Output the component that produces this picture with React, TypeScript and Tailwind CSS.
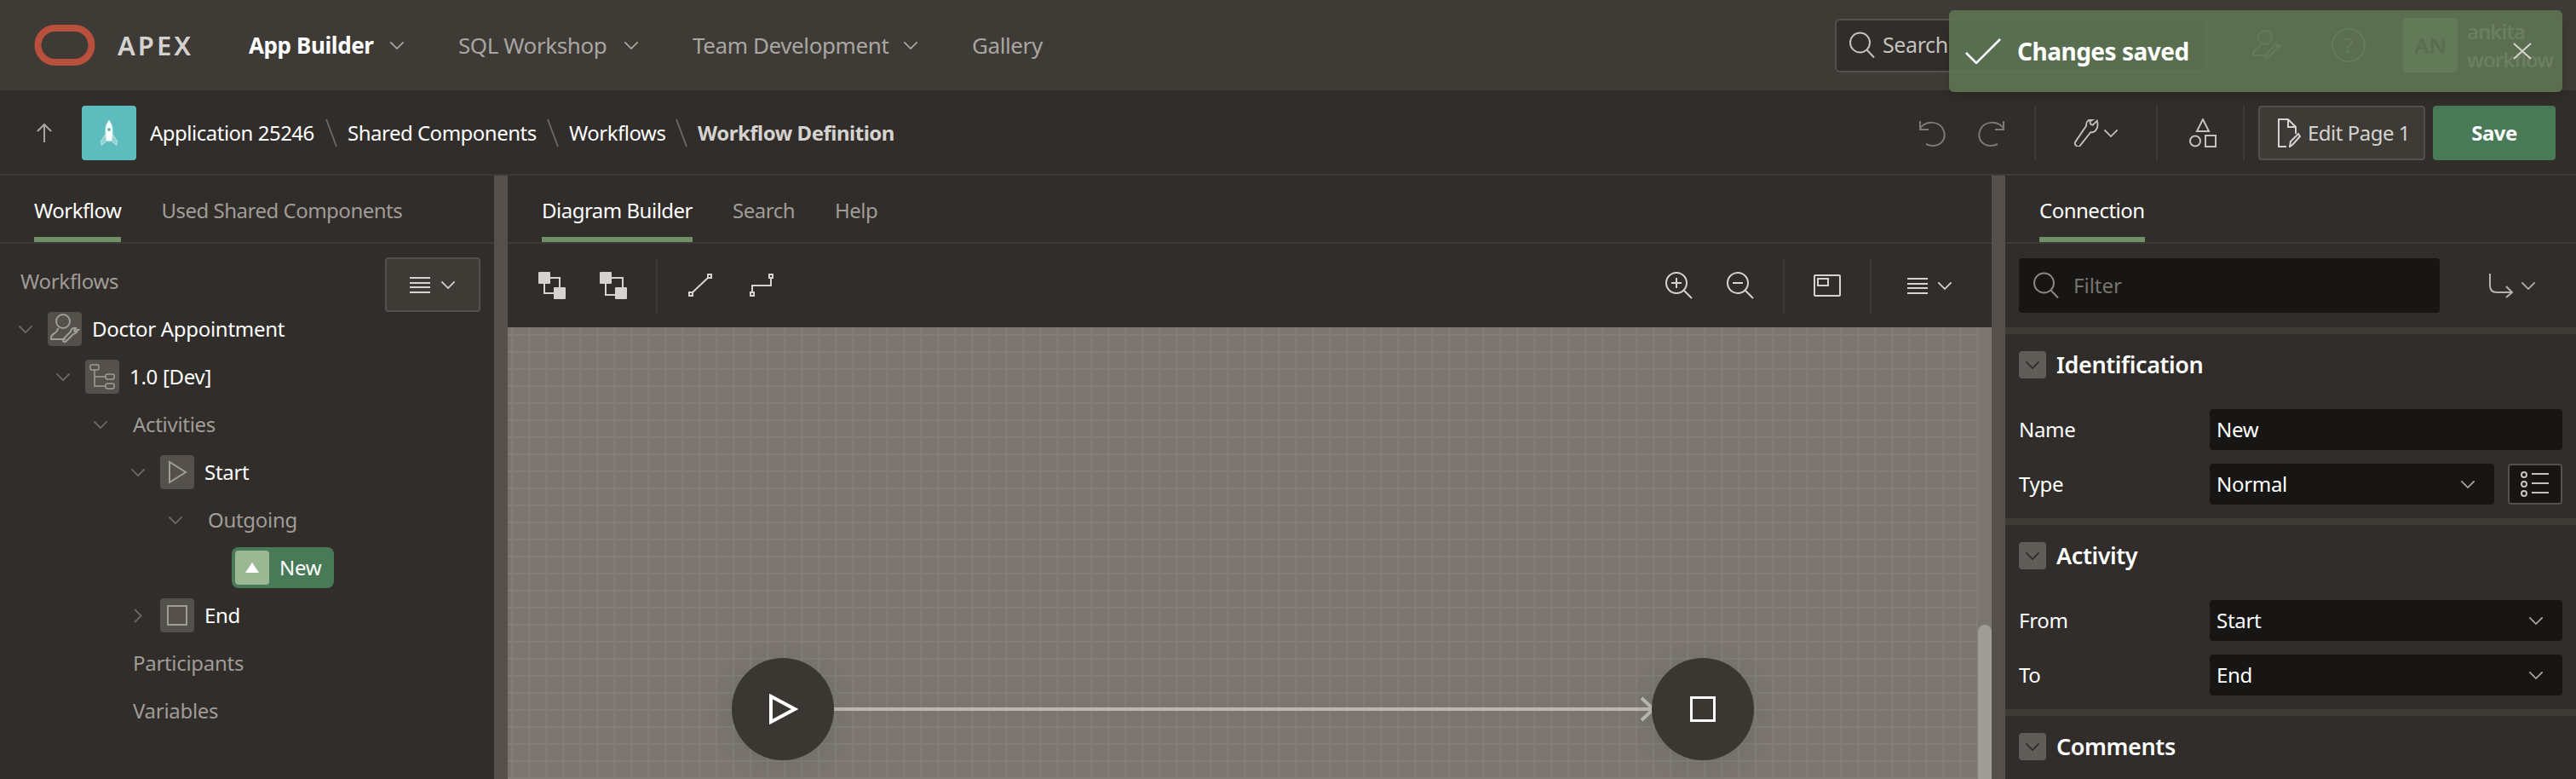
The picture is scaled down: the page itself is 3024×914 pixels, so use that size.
import { ReactNode } from "react";

function Chevron({ className = "" }: { className?: string }) {
	return (
		<svg viewBox="0 0 20 12" fill="none" stroke="currentColor" strokeWidth="2" className={"w-[18px] h-[11px] shrink-0 " + className}>
			<path d="M1.5 1.5 10 10l8.5-8.5" />
		</svg>
	);
}

function Glass({ className = "" }: { className?: string }) {
	return (
		<svg viewBox="0 0 32 32" fill="none" stroke="currentColor" strokeWidth="2" className={"w-8 h-8 shrink-0 " + className}>
			<circle cx="13.5" cy="13" r="11.5" />
			<path d="m21.5 21.5 8.5 9" />
		</svg>
	);
}

function MenuLines() {
	return (
		<svg viewBox="0 0 24 20" fill="none" stroke="currentColor" strokeWidth="2" className="w-6 h-5 shrink-0">
			<path d="M0 2h24M0 8h24M0 13h24M0 19h24" />
		</svg>
	);
}

function UserWrench({ className = "" }: { className?: string }) {
	return (
		<svg viewBox="0 0 40 40" fill="none" stroke="currentColor" strokeWidth="2" className={className}>
			<circle cx="18" cy="11" r="8" />
			<path d="M12 19c0 3-1 4-4 6-3 1.500-4 3-4 6v1h17" />
			<path d="M36 21l-3 3-2-2 2-3c-3-1-6 1-6 4l-9 9c-1 2 2 4 3 3l9-9c3 0 5-3 4-5z" />
		</svg>
	);
}

function VersionIcon() {
	return (
		<svg viewBox="0 0 40 40" fill="none" stroke="#a09c97" strokeWidth="1.5" className="w-10 h-10">
			<rect x="6" y="6" width="10" height="6" rx="2" />
			<rect x="24" y="17" width="10" height="6" rx="2" />
			<rect x="24" y="28" width="10" height="6" rx="2" />
			<path d="M11 12v19h13M11 20h13" />
		</svg>
	);
}

function StartIcon() {
	return (
		<svg viewBox="0 0 40 40" fill="none" stroke="#a09c97" strokeWidth="2" className="w-10 h-10">
			<path d="M11 8v24l19-12z" />
		</svg>
	);
}

function EndIcon() {
	return (
		<svg viewBox="0 0 40 40" fill="none" stroke="#a09c97" strokeWidth="2" className="w-10 h-10">
			<rect x="9" y="9" width="22" height="22" />
		</svg>
	);
}

const navItems = [
	{ label: "App Builder", cls: "font-bold text-white w-[183px]", chev: true },
	{ label: "SQL Workshop", cls: "text-[#a9a6a1] w-[212px]", chev: true },
	{ label: "Team Development", cls: "text-[#a9a6a1] w-[265px]", chev: true },
	{ label: "Gallery", cls: "text-[#a9a6a1] w-[90px]", chev: false },
];

function TopNav() {
	return (
		<header className="relative h-[106px] shrink-0 bg-[#3e3b37] flex items-center pl-10 pr-7">
			<svg viewBox="0 0 72 48" fill="none" className="w-[72px] h-12 shrink-0">
				<rect x="4.500" y="4" width="63" height="40" rx="20" stroke="#b8503b" strokeWidth="8" />
			</svg>
			<span className="ml-[26px] w-[154px] text-[31px] font-semibold tracking-[3px] text-[#d4d2ce]">APEX</span>
			<nav className="flex items-center gap-[63px] text-[26px] tracking-[-0.4px]">
				{navItems.map((item) => (
					<div key={item.label} className={"flex items-center justify-between whitespace-nowrap " + item.cls}>
						<span>{item.label}</span>
						{item.chev && <Chevron className="text-[#a9a6a1]" />}
					</div>
				))}
			</nav>
			<div className="ml-auto flex items-center">
				<div className="w-[437px] h-[63px] bg-[#312d2a] border-2 border-[#55504c] rounded-md flex items-center pl-[14px] gap-[8px] text-[#c5c2be]">
					<Glass />
					<span className="text-[25px] tracking-[-0.4px]">Search</span>
				</div>
				<UserWrench className="ml-[50px] w-10 h-10 text-[#a9a6a1]" />
				<div className="ml-[56px] w-10 h-10 rounded-full border-2 border-[#a9a6a1] flex items-center justify-center text-[24px] text-[#a9a6a1]">?</div>
				<div className="ml-[44px] w-16 h-16 rounded bg-[#8cab88] flex items-center justify-center text-[26px] font-semibold text-[#2f2c29]">AN</div>
				<div className="ml-[11px] w-[100px] text-[24px] leading-[33px] tracking-[-1px] font-semibold text-[#d5d3cf]">
					<p>ankita</p>
					<p>workflow</p>
				</div>
			</div>
			<div className="absolute left-[2288px] top-3 w-[720px] h-24 rounded-md bg-[#5e7453]/90 shadow-lg flex items-center pl-[19px] text-white">
				<svg viewBox="0 0 42 30" fill="none" stroke="currentColor" strokeWidth="2.500" className="w-[42px] h-[30px] shrink-0">
					<path d="M1 17l12 12L41 1" />
				</svg>
				<span className="ml-[19px] text-[28px] font-bold tracking-[-0.5px]">Changes saved</span>
				<svg viewBox="0 0 22 20" fill="none" stroke="currentColor" strokeWidth="2" className="absolute left-[662px] top-[38px] w-[22px] h-5 text-[#d5d3cf]">
					<path d="M1 1l20 18M21 1 1 19" />
				</svg>
			</div>
		</header>
	);
}

function Slash() {
	return (
		<svg viewBox="0 0 14 34" fill="none" stroke="#6b6762" strokeWidth="2" className="w-[14px] h-[34px] shrink-0">
			<path d="M1 1l12 32" />
		</svg>
	);
}

function Divider() {
	return <div className="w-0.5 h-16 bg-[#3e3b37] shrink-0" />;
}

function PageBar() {
	return (
		<div className="h-[100px] shrink-0 bg-[#312d2a] border-b-2 border-[#3e3b37] flex items-center pt-0.5 pl-[42px] pr-6 text-[24px] tracking-[-0.5px] text-white">
			<svg viewBox="0 0 20 24" fill="none" stroke="#a9a6a1" strokeWidth="2" className="w-5 h-6 shrink-0">
				<path d="M10 23V2M2 10l8-8 8 8" />
			</svg>
			<div className="ml-[34px] w-16 h-16 rounded bg-[#5dbcbc] flex items-center justify-center shrink-0">
				<svg viewBox="0 0 26 40" className="w-6 h-8">
					<path d="M13 1c-5 6-6 13-5 22l1 9h8l1-9c1-9 0-16-5-22z" fill="#fff" stroke="#a7dada" strokeWidth="1" />
					<path d="M8 22 1 32l1 6 7-6zM18 22l7 10-1 6-7-6z" fill="#8fd0d0" stroke="#d8f0f0" strokeWidth="1" />
					<circle cx="13" cy="15" r="2.500" fill="#5dbcbc" />
				</svg>
			</div>
			<span className="ml-4 w-[206px] whitespace-nowrap">Application 25246</span>
			<Slash />
			<span className="ml-3 w-[234px] whitespace-nowrap">Shared Components</span>
			<Slash />
			<span className="ml-3 w-[125px] whitespace-nowrap">Workflows</span>
			<Slash />
			<span className="ml-3 whitespace-nowrap font-bold text-[#d5d3cf]">Workflow Definition</span>

			<div className="ml-auto flex items-center">
				<svg viewBox="0 0 32 32" fill="none" stroke="#7d7974" strokeWidth="2" className="w-8 h-8 shrink-0">
					<path d="M2 2v10h10M2 11c6-10 24-10 28 3 3 11-5 17-13 17-3 0-6-1-8-2" />
				</svg>
				<svg viewBox="0 0 32 32" fill="none" stroke="#7d7974" strokeWidth="2" className="ml-[38px] w-8 h-8 shrink-0">
					<path d="M30 2v10H20M30 11C24 1 6 1 2 14c-3 11 5 17 13 17 3 0 6-1 8-2" />
				</svg>
				<div className="ml-[34px]"><Divider /></div>
				<svg viewBox="0 0 38 38" fill="none" stroke="#c5c2be" strokeWidth="2.200" className="ml-[44px] w-8 h-8 shrink-0">
					<path d="M33 2l-6 6-3-1-1-4 5-3c-6-1-11 3-10 9L3 31c-3 4 3 9 6 6l15-19c6 1 12-6 9-16z" />
				</svg>
				<Chevron className="ml-[3px] text-[#c5c2be]" />
				<div className="ml-[44px]"><Divider /></div>
				<svg viewBox="0 0 32 34" fill="none" stroke="#c5c2be" strokeWidth="2" className="ml-[37px] w-8 h-[34px] shrink-0">
					<path d="M16 1l7 14H9zM19 20h12v13H19z" />
					<circle cx="7" cy="26.500" r="6" />
				</svg>
				<div className="ml-[31px]"><Divider /></div>
				<div className="ml-4 w-[196px] h-16 rounded bg-[#3e3b37] border-2 border-[#55504c] flex items-center pl-5 gap-2 text-[#d5d3cf]">
					<svg viewBox="0 0 28 34" fill="none" stroke="currentColor" strokeWidth="2" className="w-7 h-[34px] shrink-0">
						<path d="M11 33H2V1h11l9 9v8M13 1v9h9" />
						<path d="M15 33l1-6 9-9 2 3-9 10z" />
					</svg>
					<span className="whitespace-nowrap">Edit Page 1</span>
				</div>
				<div className="ml-[9px] w-36 h-16 rounded bg-[#487a57] flex items-center justify-center font-bold text-white">Save</div>
			</div>
		</div>
	);
}

function Tab({ label, active = false }: { label: string; active?: boolean }) {
	return (
		<div className={"h-[78px] flex items-center border-b-[6px] whitespace-nowrap pt-[10px] " + (active ? "border-[#6f8f66] text-white" : "border-transparent text-[#a09c97]")}>
			{label}
		</div>
	);
}

function TabRow({ children, className = "" }: { children: ReactNode; className?: string }) {
	return (
		<div className={"h-[80px] shrink-0 border-b-2 border-[#3e3b37] flex text-[24px] tracking-[-0.5px] " + className}>
			{children}
		</div>
	);
}

type TreeRow = {
	label: string;
	pad: string;
	chevron?: "down" | "right";
	icon?: ReactNode;
	muted?: boolean;
};

const treeRows: TreeRow[] = [
	{ label: "Doctor Appointment", pad: "pl-0", chevron: "down", icon: <UserWrench className="w-10 h-10 text-[#a09c97]" /> },
	{ label: "1.0 [Dev]", pad: "pl-11", chevron: "down", icon: <VersionIcon /> },
	{ label: "Activities", pad: "pl-22", chevron: "down", muted: true },
	{ label: "Start", pad: "pl-33", chevron: "down", icon: <StartIcon /> },
	{ label: "Outgoing", pad: "pl-44", chevron: "down", muted: true },
	{ label: "End", pad: "pl-33", chevron: "right", icon: <EndIcon /> },
	{ label: "Participants", pad: "pl-22", muted: true },
	{ label: "Variables", pad: "pl-22", muted: true },
];

function TreeLine({ row }: { row: TreeRow }) {
	return (
		<div className={"h-14 flex items-center text-[24px] tracking-[-0.3px] " + row.pad}>
			<div className="w-14 pl-[21px] shrink-0 text-[#6f6b66]">
				{row.chevron === "down" && <Chevron />}
				{row.chevron === "right" && <Chevron className="-rotate-90" />}
			</div>
			{row.icon ? <div className="w-10 h-10 rounded bg-[#55504c] shrink-0 mr-3">{row.icon}</div> : <div className="w-3 shrink-0" />}
			<span className={row.muted ? "text-[#a09c97]" : "text-white"}>{row.label}</span>
		</div>
	);
}

function WorkflowTree() {
	return (
		<aside className="w-[580px] shrink-0 bg-[#312d2a] flex flex-col">
			<TabRow className="pl-10 gap-[47px]">
				<Tab label="Workflow" active />
				<Tab label="Used Shared Components" />
			</TabRow>
			<div className="h-[72px] flex justify-between pl-6 pr-4 pt-4">
				<span className="text-[24px] tracking-[-0.3px] text-[#a09c97] mt-[10px]">Workflows</span>
				<div className="w-28 h-16 rounded bg-[#3e3b37] border-2 border-[#55504c] flex items-center justify-center gap-3 text-[#d5d3cf]">
					<MenuLines />
					<Chevron />
				</div>
			</div>
			<div>
				{treeRows.slice(0, 5).map((row) => <TreeLine key={row.label} row={row} />)}
				<div className="h-14 flex items-center pl-[272px] text-[24px] tracking-[-0.3px] text-white">
					<div className="h-12 w-[120px] rounded-lg bg-[#487a57] flex items-center pl-1">
						<div className="w-10 h-10 rounded bg-[#9bb892] flex items-center justify-center">
							<svg viewBox="0 0 16 12" fill="#fff" className="w-4 h-3"><path d="M8 0l8 12H0z" /></svg>
						</div>
						<span className="ml-3">New</span>
					</div>
				</div>
				{treeRows.slice(5).map((row) => <TreeLine key={row.label} row={row} />)}
			</div>
		</aside>
	);
}

function Splitter() {
	return <div className="w-4 shrink-0 bg-[#55504c]" />;
}

function NodeIcon({ children }: { children: ReactNode }) {
	return (
		<svg viewBox="0 0 32 32" fill="none" stroke="#d5d3cf" strokeWidth="2" className="w-8 h-8 shrink-0">
			{children}
		</svg>
	);
}

function Toolbar() {
	return (
		<div className="h-[98px] shrink-0 bg-[#312d2a] flex items-center pl-9 pr-[46px] text-[#d5d3cf]">
			<NodeIcon>
				<rect x="7" y="7" width="18" height="18" />
				<rect x="0" y="0" width="14" height="14" rx="1" fill="#d5d3cf" stroke="none" />
				<rect x="18" y="18" width="14" height="14" rx="1" fill="#d5d3cf" stroke="none" />
			</NodeIcon>
			<div className="ml-10">
				<NodeIcon>
					<path d="M14 7h13v12M7 14v13h12" />
					<rect x="0" y="0" width="14" height="14" rx="1" fill="#d5d3cf" stroke="none" />
					<rect x="18" y="18" width="14" height="14" rx="1" fill="#d5d3cf" stroke="none" />
				</NodeIcon>
			</div>
			<div className="ml-[34px]"><Divider /></div>
			<svg viewBox="0 0 28 28" fill="none" stroke="currentColor" strokeWidth="2" className="ml-9 w-7 h-7 shrink-0">
				<rect x="1" y="22" width="4" height="4" />
				<rect x="23" y="1" width="4" height="4" />
				<path d="M5 22 23 5" />
			</svg>
			<svg viewBox="0 0 28 28" fill="none" stroke="currentColor" strokeWidth="2" className="ml-11 w-7 h-7 shrink-0">
				<rect x="1" y="22" width="4" height="4" />
				<rect x="23" y="1" width="4" height="4" />
				<path d="M3 22V14h22V5" />
			</svg>
			<div className="ml-auto flex items-center">
				<NodeIcon>
					<circle cx="13" cy="13" r="12" />
					<path d="M7 13h12M13 7v12M22 22l9 9" />
				</NodeIcon>
				<div className="ml-10">
					<NodeIcon>
						<circle cx="13" cy="13" r="12" />
						<path d="M7 13h12M22 22l9 9" />
					</NodeIcon>
				</div>
				<div className="ml-[34px]"><Divider /></div>
				<svg viewBox="0 0 32 26" fill="none" stroke="currentColor" strokeWidth="2" className="ml-[34px] w-8 h-[26px] shrink-0">
					<rect x="1" y="1" width="30" height="24" rx="1" />
					<rect x="5" y="5" width="12" height="8" />
				</svg>
				<div className="ml-[34px]"><Divider /></div>
				<div className="ml-[42px] flex items-center gap-[11px]">
					<MenuLines />
					<Chevron />
				</div>
			</div>
		</div>
	);
}

function Canvas() {
	return (
		<div className="relative flex-1 overflow-hidden bg-[#7a756f]">
			<div className="w-[1726px] h-full bg-[linear-gradient(#827d78_2px,transparent_2px),linear-gradient(90deg,#827d78_2px,transparent_2px)] bg-[size:20px_20px] bg-[position:4px_8px]" />
			<svg viewBox="0 0 980 30" fill="none" stroke="#bcb7b1" strokeWidth="4" className="absolute left-[383px] top-[433px] w-[980px] h-[30px]">
				<path d="M0 15h962" />
				<path d="M948 2l14 13-14 13" />
			</svg>
			<div className="absolute left-[263px] top-[388px] w-[120px] h-[120px] rounded-full bg-[#3a3732] shadow-[0_4px_30px_rgba(0,0,0,0.08)] flex items-center justify-center">
				<svg viewBox="0 0 34 36" fill="none" stroke="#fff" strokeWidth="4" className="w-[34px] h-9 ml-[2px]">
					<path d="M2 3v30l28-15z" />
				</svg>
			</div>
			<div className="absolute left-[1343px] top-[388px] w-[120px] h-[120px] rounded-full bg-[#3a3732] shadow-[0_4px_30px_rgba(0,0,0,0.08)] flex items-center justify-center">
				<div className="w-[30px] h-[30px] border-[3px] border-white" />
			</div>
			<div className="absolute right-0 top-[349px] bottom-0 w-4 rounded-t-full bg-[#a09c97]" />
		</div>
	);
}

function SectionHead({ title }: { title: string }) {
	return (
		<div className="h-8 flex items-center gap-3">
			<div className="w-8 h-8 rounded bg-[#605c58] flex items-center justify-center text-[#2f2c29]">
				<Chevron />
			</div>
			<h2 className="text-[27px] leading-8 font-semibold tracking-[-0.4px] text-white">{title}</h2>
		</div>
	);
}

function Field({ label, value, chevron = false, extra }: { label: string; value: string; chevron?: boolean; extra?: ReactNode }) {
	return (
		<div className="h-12 flex items-center text-[24px] tracking-[-0.3px] text-white">
			<span className="w-[224px] shrink-0">{label}</span>
			<div className="flex-1 h-12 rounded bg-[#171614] flex items-center justify-between pl-2 pr-[22px]">
				<span>{value}</span>
				{chevron && <Chevron className="text-[#a9a6a1]" />}
			</div>
			{extra}
		</div>
	);
}

function PropertyPanel() {
	return (
		<aside className="w-[670px] shrink-0 bg-[#312d2a] flex flex-col">
			<TabRow className="pl-10">
				<Tab label="Connection" active />
			</TabRow>
			<div className="h-[98px] shrink-0 flex items-center pl-4 pr-[47px]">
				<div className="w-[494px] h-16 rounded bg-[#171614] flex items-center pl-4 gap-4 text-[24px] text-[#77736e]">
					<Glass className="text-[#8a8681]" />
					<span>Filter</span>
				</div>
				<div className="ml-auto flex items-center gap-[9px] text-[#b5b2ad]">
					<svg viewBox="0 0 28 30" fill="none" stroke="currentColor" strokeWidth="2" className="w-7 h-[30px] shrink-0">
						<path d="M1 1v14c0 6 3 8 8 8h18M20 16l7 7-7 6" />
					</svg>
					<Chevron />
				</div>
			</div>
			<div className="h-2 shrink-0 bg-[#3e3b37]" />
			<section className="px-4 pt-5 pb-4">
				<SectionHead title="Identification" />
				<div className="mt-9 flex flex-col gap-4">
					<Field label="Name" value="New" />
					<Field
						label="Type"
						value="Normal"
						chevron
						extra={
							<div className="ml-4 w-16 h-12 rounded bg-[#171614] border-2 border-[#55504c] flex items-center justify-center text-[#c5c2be] shrink-0">
								<svg viewBox="0 0 34 30" fill="none" stroke="currentColor" strokeWidth="2" className="w-[34px] h-[30px]">
									<circle cx="4" cy="4" r="3" />
									<circle cx="4" cy="15" r="3" />
									<circle cx="4" cy="26" r="3" />
									<path d="M13 3h20M13 14h20M13 25h20" />
								</svg>
							</div>
						}
					/>
				</div>
			</section>
			<div className="h-2 shrink-0 bg-[#3e3b37]" />
			<section className="px-4 pt-5 pb-4">
				<SectionHead title="Activity" />
				<div className="mt-9 flex flex-col gap-4">
					<Field label="From" value="Start" chevron />
					<Field label="To" value="End" chevron />
				</div>
			</section>
			<div className="h-2 shrink-0 bg-[#3e3b37]" />
			<section className="px-4 pt-5">
				<SectionHead title="Comments" />
			</section>
		</aside>
	);
}

export default function App() {
	return (
		<div className="h-screen overflow-hidden flex flex-col bg-[#312d2a] font-['Noto_Sans',sans-serif]">
			<TopNav />
			<PageBar />
			<main className="flex-1 flex min-h-0">
				<WorkflowTree />
				<Splitter />
				<section className="flex-1 min-w-0 flex flex-col">
					<TabRow className="bg-[#312d2a] pl-10 gap-[47px]">
						<Tab label="Diagram Builder" active />
						<Tab label="Search" />
						<Tab label="Help" />
					</TabRow>
					<Toolbar />
					<Canvas />
				</section>
				<Splitter />
				<PropertyPanel />
			</main>
		</div>
	);
}
